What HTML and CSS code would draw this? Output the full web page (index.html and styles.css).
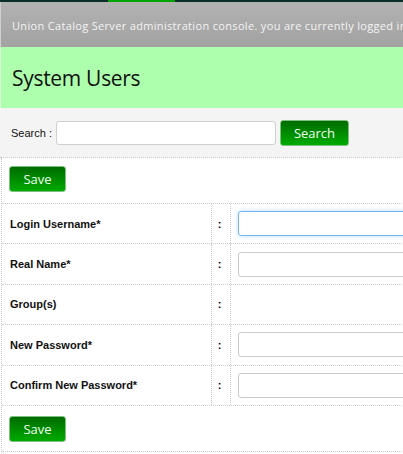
FILE: index.html
```html
<!DOCTYPE html>
<html>
<head>
<meta charset="utf-8">
<link rel="stylesheet" href="styles.css">
</head>
<body>
<div class="page">
  <div class="topstrip"><span class="tab-active"></span></div>
  <div class="infobar">Union Catalog Server administration console. you are currently logged in as admin</div>
  <div class="titlebar"><h1>System Users</h1></div>
  <div class="searchbar">
    <label class="search-label">Search :</label>
    <input class="search-input" type="text">
    <button class="btn btn-search">Search</button>
  </div>
  <div class="form">
    <div class="actions"><button class="btn btn-save">Save</button></div>
    <div class="row">
      <div class="label">Login Username*</div>
      <div class="colon">:</div>
      <div class="field"><input class="text focus" type="text"></div>
    </div>
    <div class="row">
      <div class="label">Real Name*</div>
      <div class="colon">:</div>
      <div class="field"><input class="text" type="text"></div>
    </div>
    <div class="row">
      <div class="label">Group(s)</div>
      <div class="colon">:</div>
      <div class="field"></div>
    </div>
    <div class="row">
      <div class="label">New Password*</div>
      <div class="colon">:</div>
      <div class="field"><input class="text" type="password"></div>
    </div>
    <div class="row">
      <div class="label">Confirm New Password*</div>
      <div class="colon">:</div>
      <div class="field"><input class="text" type="password"></div>
    </div>
    <div class="actions actions-bottom"><button class="btn btn-save">Save</button></div>
  </div>
</div>
</body>
</html>
```
FILE: styles.css
```css
html, body {
  margin: 0;
  padding: 0;
  overflow: hidden;
  background: #fff;
}
.page {
  width: 1000px;
  font-family: "Liberation Sans", Arial, sans-serif;
}
.topstrip {
  height: 2px;
  background: #0c2b2b;
  display: flex;
}
.tab-active {
  width: 67px;
  height: 2px;
  margin-left: 108px;
  background: #00a400;
}
.infobar {
  height: 45px;
  box-sizing: border-box;
  padding: 16px 0 0 11px;
  background: linear-gradient(#b2b2b2, #a2a2a2);
  border-left: 1px solid #d0d0d0;
  color: #f4f4f4;
  font-family: "Open Sans", sans-serif;
  font-size: 11px;
  letter-spacing: 0.33px;
  white-space: nowrap;
}
.titlebar {
  height: 61px;
  background: #adffad;
  box-sizing: border-box;
  padding: 0 0 0 11px;
  display: flex;
  align-items: center;
  border-left: 1px solid #d8ffd8;
}
.titlebar h1 {
  margin: 0;
  font-family: "Open Sans", sans-serif;
  font-weight: normal;
  font-size: 21px;
  color: #111;
  letter-spacing: -0.3px;
}
.searchbar {
  height: 50px;
  box-sizing: border-box;
  background: #f4f4f4;
  display: flex;
  align-items: center;
  padding-left: 11px;
  border-bottom: 1px dotted #ccc;
}
.search-label {
  font-size: 11px;
  color: #111;
  margin-right: 4px;
}
.search-input {
  width: 220px;
  height: 24px;
  box-sizing: border-box;
  border: 1px solid #cfcfcf;
  border-radius: 3px;
  background: #fff;
  margin: 0 4px 0 0;
  padding: 0;
}
.btn {
  background: linear-gradient(#006c00, #00aa00);
  border: 1px solid #7fbf7f;
  border-radius: 3px;
  color: #f0fff0;
  font-family: "Open Sans", sans-serif;
  font-size: 13px;
  height: 26px;
  padding: 0;
  margin: 0;
}
.btn-search {
  width: 69px;
}
.form {
  border-left: 1px dotted #ccc;
  margin-left: 1px;
}
.actions {
  height: 46px;
  box-sizing: border-box;
  padding: 8px 0 0 7px;
  border-bottom: 1px dotted #ccc;
}
.actions-bottom {
  padding-top: 10px;
}
.btn-save {
  width: 57px;
}
.row {
  display: flex;
  height: 40.4px;
  box-sizing: border-box;
  border-bottom: 1px dotted #ccc;
}
.label {
  width: 210px;
  box-sizing: border-box;
  padding-left: 8px;
  display: flex;
  align-items: center;
  font-size: 11px;
  font-weight: bold;
  color: #111;
  border-right: 1px dotted #ccc;
}
.colon {
  width: 19px;
  box-sizing: border-box;
  padding-right: 3px;
  display: flex;
  align-items: center;
  justify-content: center;
  font-size: 11px;
  font-weight: bold;
  border-right: 1px dotted #ccc;
}
.field {
  flex: 1;
  display: flex;
  align-items: center;
  padding-left: 7px;
}
.text {
  width: 300px;
  height: 25px;
  box-sizing: border-box;
  border: 1px solid #cccccc;
  border-radius: 3px;
  background: #fff;
  margin: 0;
  padding: 0;
}
.text.focus {
  border-color: #76b6f0;
  box-shadow: 0 0 5px #b8dcff;
}
```
